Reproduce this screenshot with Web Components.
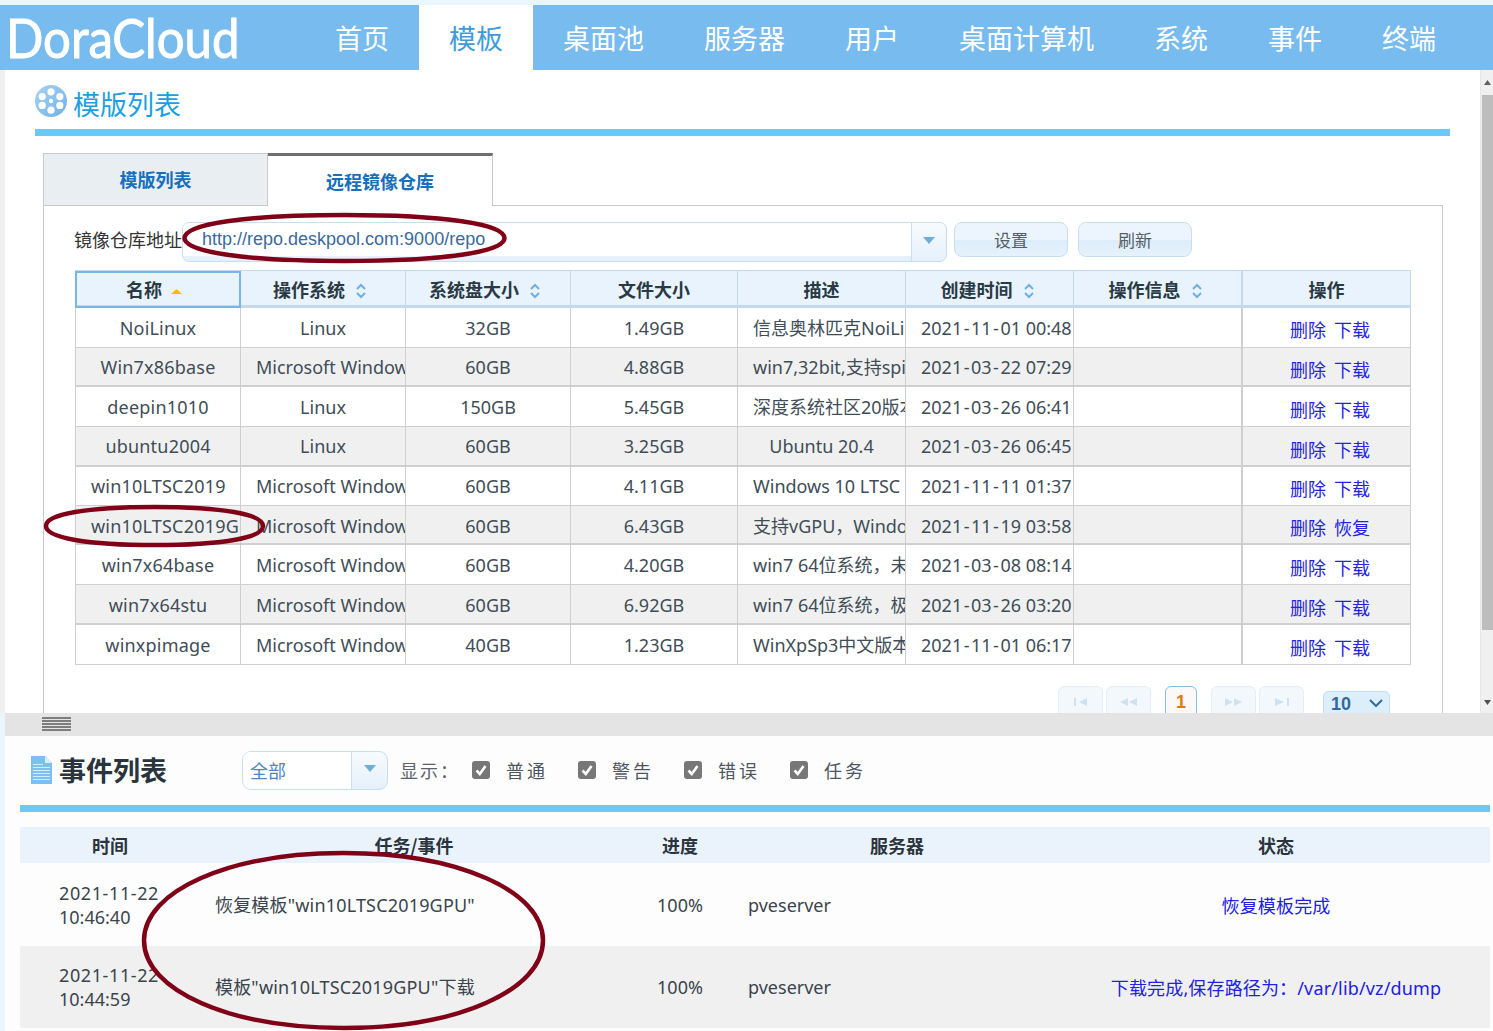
<!DOCTYPE html>
<html lang="zh-CN"><head><meta charset="utf-8"><title>DoraCloud</title>
<style>
html,body{margin:0;padding:0;background:#fff;overflow:hidden}
body{width:1493px;height:1031px;position:relative;font-family:"Noto Sans","Noto Sans CJK SC",sans-serif;font-size:18px;color:#3c4a54}
</style></head>
<body>
<dc-app></dc-app>
<script>
const F='"Noto Sans","Noto Sans CJK SC",sans-serif';
function def(name,html){
  customElements.define(name,class extends HTMLElement{
    constructor(){super();const s=this.attachShadow({mode:'open'});s.innerHTML=html;}
  });
}
const dash=t=>t.replace(/-/g,'<i>-</i>');
def('dc-nav',`<style>
:host{display:flex;height:65px;background:#78bbef;color:#fff}
.logo{width:305px;flex:none;box-sizing:border-box;padding-left:6px;overflow:hidden}
.logo span{display:inline-block;font:400 54px/65px Lato,sans-serif;-webkit-text-stroke:1px #fff;white-space:nowrap;transform:scaleX(.91);transform-origin:0 50%}
a{display:block;padding:0 30px;font:400 27px/66px "Noto Sans CJK SC",sans-serif;white-space:nowrap}
a.on{background:#fff;color:#3d9bdc}
</style><div class="logo"><span>DoraCloud</span></div>
<a>首页</a><a class="on">模板</a><a>桌面池</a><a>服务器</a><a>用户</a><a>桌面计算机</a><a>系统</a><a>事件</a><a>终端</a>`);

def('dc-reel',`<style>:host{display:block;width:32px;height:32px}svg{display:block}</style>
<svg width="32" height="32" viewBox="0 0 32 32"><defs><linearGradient id="g" x1="0" y1="0" x2="1" y2="1"><stop offset="0" stop-color="#a9d2f3"/><stop offset="1" stop-color="#6fb2e8"/></linearGradient></defs>
<circle cx="16" cy="16" r="16" fill="url(#g)"/><g fill="#fff"><circle cx="16" cy="6.8" r="3.600"/><circle cx="16" cy="25.2" r="3.600"/><circle cx="7.2" cy="11.6" r="3.600"/><circle cx="24.8" cy="11.6" r="3.600"/><circle cx="7.2" cy="20.4" r="3.600"/><circle cx="24.8" cy="20.4" r="3.600"/><circle cx="16" cy="16" r="2.200"/></g></svg>`);

def('dc-doc',`<style>:host{display:block;width:22px;height:28px}svg{display:block}</style>
<svg width="22" height="28" viewBox="0 0 22 28"><path d="M1 0H15L22 7V28H1Z" fill="#7cc0f2"/><path d="M15 0L22 7H15Z" fill="#d8eefc"/><g stroke="#d5ecfb" stroke-width="1"><path d="M3 8.500H13M3 11.500H20M3 14.500H20M3 17.500H20M3 20.500H20M3 23.500H20"/></g></svg>`);

def('dc-page-title',`<style>
:host{display:flex;height:59px;box-sizing:border-box;padding-top:15px;align-items:flex-start;gap:6px;margin:0 30px}
span{font:400 27px/38px "Noto Sans CJK SC",sans-serif;color:#1c9fe2}
</style><dc-reel></dc-reel><span><slot></slot></span>`);

def('dc-rule',`<style>:host{display:block;height:7px;background:#6ac8fa}</style>`);

def('dc-tabs',`<style>
:host{display:flex;height:53px;margin:17px 0 0 38px;position:relative;z-index:1}
div{width:225px;box-sizing:border-box;text-align:center;font:700 18px/1 "Noto Sans CJK SC",sans-serif;color:#1670bc}
.a{background:#e9eef3;border:1px solid #c9c9c9;height:53px;line-height:51px}
.b{background:#fff;border-top:3px solid #6f6f6f;border-right:1px solid #c9c9c9;height:53px;line-height:50px}
</style><div class="a">模版列表</div><div class="b">远程镜像仓库</div>`);

def('dc-combo',`<style>
:host{display:flex;box-sizing:border-box;border:1px solid #c8def1;border-radius:7px;overflow:hidden;background:linear-gradient(#f7fbfe,#e4f0fb)}
.i{flex:1;background:#fff;color:var(--c,#3a6a9c);font:var(--f,400 18px/33px "Liberation Sans",sans-serif);padding-left:var(--p,19px);height:var(--h,33px);white-space:nowrap}
.b{width:var(--w,34px);border-left:1px solid #c8def1;display:flex;align-items:center;justify-content:center;padding-bottom:4px}
svg{display:block}
</style><div class="i"><slot></slot></div><div class="b"><svg width="12" height="7" viewBox="0 0 12 7"><path d="M0 0H12L6 7Z" fill="#6eaedc"/></svg></div>`);

def('dc-btn',`<style>
:host{display:block;box-sizing:border-box;width:114px;height:35px;border:1px solid #c8def1;border-radius:8px;background:linear-gradient(#ecf5fd 0,#ecf5fd 50%,#dcecfa 51%,#e6f2fc 100%);text-align:center;font:400 17px/34px "Noto Sans CJK SC",sans-serif;color:#555e66}
</style><slot></slot>`);

def('dc-toolbar',`<style>
:host{display:flex;height:48px;box-sizing:border-box;padding:16px 0 0 30px;align-items:flex-start;color:#333}
.l{width:108px;font:400 18px/35px "Noto Sans CJK SC",sans-serif;white-space:nowrap}
dc-combo{width:765px;height:40px}
dc-btn{margin-left:7px}
dc-btn+dc-btn{margin-left:10px}
</style><div class="l">镜像仓库地址</div><dc-combo>http://repo.deskpool.com:9000/repo</dc-combo><dc-btn>设置</dc-btn><dc-btn>刷新</dc-btn>`);

const chev=`<svg width="12" height="18" viewBox="0 0 12 18" style="display:inline-block;vertical-align:-3px;margin-left:10px"><path d="M2 7L6 3L10 7M2 11L6 15L10 11" fill="none" stroke="#6db0e0" stroke-width="2"/></svg>`;
const tri=`<svg width="11" height="5" viewBox="0 0 11 5" style="display:inline-block;vertical-align:3px;margin-left:9px"><path d="M5.500 0L11 5H0Z" fill="#fbb715"/></svg>`;
const rows=[
['NoiLinux','Linux','32GB','1.49GB','信息奥林匹克NoiLinux系统','2021-11-01 00:48','下载'],
['Win7x86base','Microsoft Windows 7','60GB','4.88GB','win7,32bit,支持spice','2021-03-22 07:29','下载'],
['deepin1010','Linux','150GB','5.45GB','深度系统社区20版本','2021-03-26 06:41','下载'],
['ubuntu2004','Linux','60GB','3.25GB','Ubuntu 20.4','2021-03-26 06:45','下载'],
['win10LTSC2019','Microsoft Windows 10','60GB','4.11GB','Windows 10 LTSC 2019','2021-11-11 01:37','下载'],
['win10LTSC2019GPU','Microsoft Windows 10','60GB','6.43GB','支持vGPU，Windows 10','2021-11-19 03:58','恢复'],
['win7x64base','Microsoft Windows 7','60GB','4.20GB','win7 64位系统，未优化','2021-03-08 08:14','下载'],
['win7x64stu','Microsoft Windows 7','60GB','6.92GB','win7 64位系统，极简版','2021-03-26 03:20','下载'],
['winxpimage','Microsoft Windows XP','40GB','1.23GB','WinXpSp3中文版本','2021-11-01 06:17','下载']];
const rh=[40,39,40,40,39,39,40,40,40],rl=[40,38,40,38,38,40,40,40,40],rn=[42,42,44,44,42,42,44,44,44];
const cols='166px 165px 165px 167px 168px 168px 169px 168px';
def('dc-repo-table',`<style>
:host{display:block;width:1336px;margin-left:31px;margin-top:16px;font-family:${F};font-size:18px;color:#3f4d57}
.r{display:grid;grid-template-columns:${cols};box-sizing:border-box;border-bottom:1px solid #cfcfcf;background:#fff}
.r.e{background:#f0f0f0;border-bottom:2px solid #cfcfcf}
.c{box-sizing:border-box;border-right:1px solid #cfcfcf;padding:0 15px;text-align:center;white-space:nowrap;overflow:hidden;line-height:var(--lh)}
.c:first-child{border-left:1px solid #cfcfcf;letter-spacing:.2px}
.c i{font-style:normal;padding:0 1.500px}
.c.n{padding:0 0 0 7px;line-height:var(--ln)}
.c:nth-child(7){border-right:2px solid #cfcfcf}
.h{display:grid;grid-template-columns:${cols};height:38px;box-sizing:border-box;background:#e9f3fd;border-style:solid;border-color:#c3daee;border-width:1px 1px 3px 0}
.h div{box-sizing:border-box;border-right:1px solid #c3daee;text-align:center;font:700 18px/37px "Noto Sans CJK SC",sans-serif;color:#2a3a44;white-space:nowrap}
.h div.s{padding-right:4px}
.h div.t{padding-right:6px}
.h div:first-child{border:2px solid #7ab6e4;line-height:33px;padding-right:8px}
.h div:nth-child(7){border-right-width:2px}
a{color:#2323e8;font-family:"Noto Sans CJK SC",sans-serif;margin:0 4px}
</style><div class="h"><div>名称${tri}</div><div class="t">操作系统${chev}</div><div class="t">系统盘大小${chev}</div><div>文件大小</div><div>描述</div><div class="s">创建时间${chev}</div><div class="s">操作信息${chev}</div><div>操作</div></div>`+
rows.map((r,i)=>`<div class="r ${i%2?'e':''}" style="height:${rh[i]}px;--lh:${rl[i]}px;--ln:${rn[i]}px">${r.slice(0,5).map(t=>`<div class="c">${t}</div>`).join('')}<div class="c">${dash(r[5])}</div><div class="c"></div><div class="c n"><a>删除</a><a>${r[6]}</a></div></div>`).join(''));

def('dc-pager',`<style>
:host{display:flex;margin:21px 0 0 1014px;height:40px;align-items:flex-start}
b{box-sizing:border-box;display:flex;align-items:center;justify-content:center;width:45px;height:34px;border:1px solid #e3eef8;border-radius:6px;background:#f3f8fc;margin-right:3px;padding-bottom:3px}
b.cur{width:32px;margin:0 14px 0 11px;border-color:#86bfe9;background:#faf9f7;color:#e17a13;font:700 18px/1 "Liberation Sans",sans-serif}
b.last{margin-right:19px}
.s{box-sizing:border-box;width:67px;height:30px;margin-top:5px;border:1px solid #c2def5;border-radius:5px;background:#dcedfb;color:#2e6a9e;font:700 18px/25px "Liberation Sans",sans-serif;padding-left:7px;position:relative}
.s svg{position:absolute;right:6px;top:7px}
</style>
<b><svg width="14" height="8" viewBox="0 0 14 8"><path d="M0 0H2V8H0ZM13 0V8L5 4Z" fill="#cfe1f0"/></svg></b>
<b><svg width="17" height="8" viewBox="0 0 17 8"><path d="M8 0V8L0 4ZM17 0V8L9 4Z" fill="#cfe1f0"/></svg></b>
<b class="cur">1</b>
<b><svg width="17" height="8" viewBox="0 0 17 8"><path d="M0 0V8L8 4ZM9 0V8L17 4Z" fill="#cfe1f0"/></svg></b>
<b class="last"><svg width="14" height="8" viewBox="0 0 14 8"><path d="M0 0V8L9 4ZM12 0H14V8H12Z" fill="#cfe1f0"/></svg></b>
<div class="s">10<svg width="14" height="8" viewBox="0 0 14 8"><path d="M1 1L7 7L13 1" fill="none" stroke="#2e6a9e" stroke-width="2"/></svg></div>`);

def('dc-box',`<style>
:host{display:block;box-sizing:border-box;margin:-1px 37px 0 38px;border:1px solid #c9c9c9;background:#fff;height:600px}
</style><slot></slot>`);

def('dc-scrollbar',`<style>
:host{display:flex;flex-direction:column;align-items:center;width:13px;flex:none;background:#f0f0f0;box-sizing:border-box;border-left:1px solid #e6e6e6}
.u{height:25px;display:flex;align-items:center;justify-content:center}
.t{width:11px;height:535px;background:#bdbdbd}
.d{margin-top:auto;height:22px;display:flex;align-items:center;justify-content:center}
</style><div class="u"><svg width="7" height="5" viewBox="0 0 7 5"><path d="M3.500 0L7 5H0Z" fill="#606060"/></svg></div><div class="t"></div><div class="d"><svg width="7" height="5" viewBox="0 0 7 5"><path d="M0 0H7L3.500 5Z" fill="#505050"/></svg></div>`);

def('dc-upper',`<style>
:host{display:flex;height:643px;border-left:5px solid #f0f0f0;overflow:hidden}
main{flex:1;min-width:0;overflow:hidden;background:#fff}
dc-rule{margin:0 30px}
</style><main><dc-page-title>模版列表</dc-page-title><dc-rule></dc-rule><dc-tabs></dc-tabs>
<dc-box><dc-toolbar></dc-toolbar><dc-repo-table></dc-repo-table><dc-pager></dc-pager></dc-box></main><dc-scrollbar></dc-scrollbar>`);

def('dc-splitter',`<style>
:host{display:block;height:23px;margin-left:5px;background:#e4e4e4;box-sizing:border-box;padding:3px 0 0 37px}
svg{display:block}
</style><svg width="30" height="16" viewBox="0 0 30 16"><path d="M0 2H29M0 5H29M0 8H29M0 11H29M0 14H29" stroke="#444" stroke-width="1.500" opacity=".85"/></svg>`);

def('dc-check',`<style>
:host{display:flex;align-items:center;gap:16px;font:400 18px/1 "Noto Sans CJK SC",sans-serif;letter-spacing:3px;color:#4d565e;width:106px}
svg{display:block;flex:none}
</style><svg width="18" height="18" viewBox="0 0 18 18"><rect width="18" height="18" rx="3" fill="#777"/><path d="M4.500 9.500L7.800 13L13.500 5" fill="none" stroke="#fff" stroke-width="2.600"/></svg><slot></slot>`);

def('dc-event-bar',`<style>
:host{display:flex;align-items:center;height:69px;padding:0 0 2px 25px;box-sizing:border-box;margin-left:-15px}
.t{font:700 27px/1 "Noto Sans CJK SC",sans-serif;color:#2a343c;margin-left:7px;width:183px;white-space:nowrap}
dc-combo{width:146px;height:39px;margin-top:2px;--w:35px;--h:38px;--p:7px;--c:#4a86c0;--f:400 18px/36px "Noto Sans CJK SC",sans-serif;border-radius:9px}
.s{font:400 18px/1 "Noto Sans CJK SC",sans-serif;color:#5a636b;letter-spacing:2px;margin-left:12px;width:72px;white-space:nowrap}
</style><dc-doc></dc-doc><div class="t">事件列表</div><dc-combo>全部</dc-combo><div class="s">显示：</div><dc-check>普通</dc-check><dc-check>警告</dc-check><dc-check>错误</dc-check><dc-check>任务</dc-check>`);

const ecols='180px 428px 104px 330px 428px';
const ev=[['2021-11-22 10:46:40','恢复模板"win10LTSC2019GPU"','100%','pveserver','恢复模板完成'],
['2021-11-22 10:44:59','模板"win10LTSC2019GPU"下载','100%','pveserver','下载完成,保存路径为：/var/lib/vz/dump']];
def('dc-event-table',`<style>
:host{display:block;margin-top:15px;font-family:${F};font-size:18px;color:#3a444c}
.h,.r{display:grid;grid-template-columns:${ecols}}
.h{height:36px;background:#eaf3fc;text-align:center;font:700 18px/36px "Noto Sans CJK SC",sans-serif;color:#2a343c}
.r{height:82.500px;align-items:center}
.r>div{padding-top:2px}
.r.e{background:#f0f0f0}
.r.e>div{padding-top:1px}
.r.e>.t{padding-top:0}
.t{box-sizing:border-box;padding-left:39px;width:150px;line-height:24px}
.t::first-line{letter-spacing:.6px}
.x{padding-left:15px;line-height:24px;white-space:nowrap;letter-spacing:.18px}
.p{text-align:center}
.v{padding-left:16px}
.z{text-align:center;color:#2020e6;white-space:nowrap;letter-spacing:.15px}
</style><div class="h"><div>时间</div><div>任务/事件</div><div>进度</div><div>服务器</div><div>状态</div></div>`+
ev.map((e,i)=>`<div class="r ${i?'e':''}"><div class="t">${e[0]}</div><div class="x">${e[1]}</div><div class="p">${e[2]}</div><div class="v">${e[3]}</div><div class="z">${e[4]}</div></div>`).join(''));

def('dc-lower',`<style>
:host{display:block;margin-left:5px;height:295px;box-sizing:border-box;padding:0 3px 0 15px;background:#fdfdfd;overflow:hidden}
</style><dc-event-bar></dc-event-bar><dc-rule></dc-rule><dc-event-table></dc-event-table>`);

const blob=(cx,cy,rx,ry,k)=>{const a=rx*k,b=ry*k;return `<path d="M${cx-rx} ${cy}C${cx-rx} ${cy-b} ${cx-a} ${cy-ry} ${cx} ${cy-ry}C${cx+a} ${cy-ry} ${cx+rx} ${cy-b} ${cx+rx} ${cy}C${cx+rx} ${cy+b} ${cx+a} ${cy+ry} ${cx} ${cy+ry}C${cx-a} ${cy+ry} ${cx-rx} ${cy+b} ${cx-rx} ${cy}Z"/>`};
def('dc-marks',`<style>
:host{position:absolute;left:0;top:0;width:1493px;height:1031px;pointer-events:none}
svg{display:block}
</style><svg width="1493" height="1031" viewBox="0 0 1493 1031"><g fill="none" stroke="#800018" stroke-width="4.500">
${blob(344.5,238,160,23,.62)}${blob(154.5,526,108.5,19,.62)}${blob(343.5,940.5,199.5,87.5,.57)}</g></svg>`);

def('dc-app',`<style>
:host{display:block;position:relative;width:1493px;height:1031px;box-sizing:border-box;padding-top:5px;background:#eaf6fd}
</style><dc-nav></dc-nav><dc-upper></dc-upper><dc-splitter></dc-splitter><dc-lower></dc-lower><dc-marks></dc-marks>`);
</script>
</body></html>
